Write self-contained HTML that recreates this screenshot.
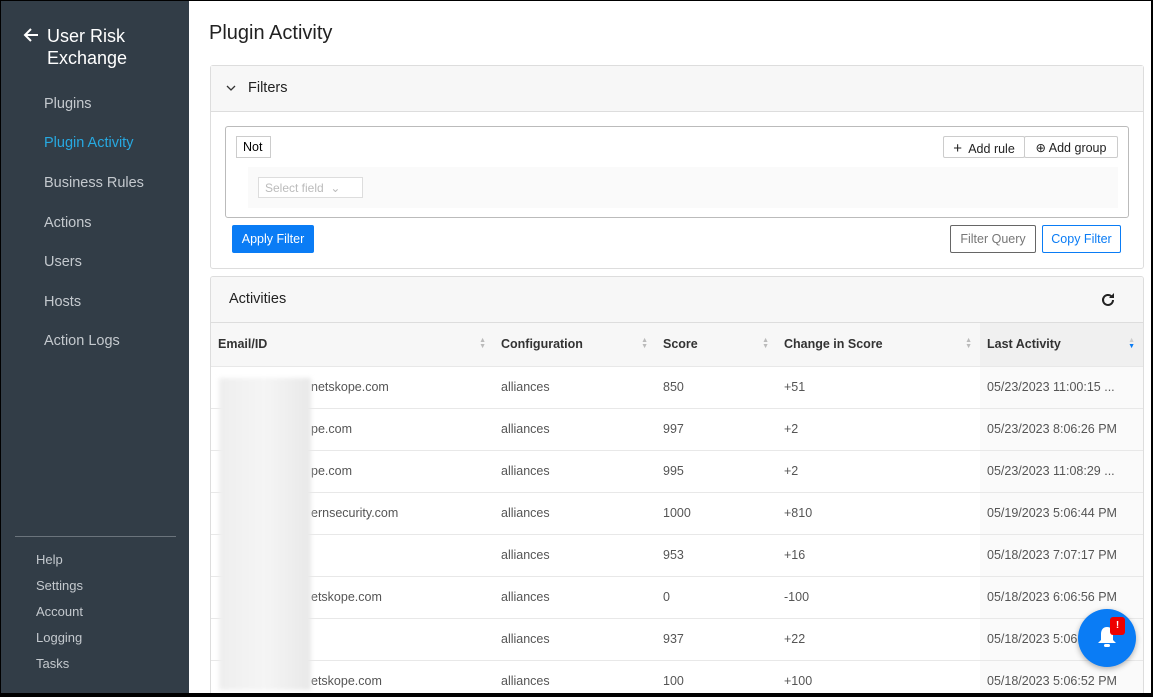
<!DOCTYPE html>
<html><head><style>
*{box-sizing:border-box;margin:0;padding:0}
body{width:1153px;height:697px;overflow:hidden;font-family:"Liberation Sans",sans-serif;background:#000;position:relative}
.win{position:absolute;left:1px;top:1px;width:1150px;height:692px;background:#fff;overflow:hidden}
.side{position:absolute;left:0;top:0;width:188px;height:692px;background:#323d47;color:#c9ced3}
.title{position:absolute;left:46px;top:24px;color:#fff;font-size:18px;line-height:22px}
.arrow{position:absolute;left:22px;top:26px}
.nav{position:absolute;left:43px;font-size:14.5px;color:#c4c9ce}
.nav.a{color:#27a9e1}
.sm{position:absolute;left:35px;font-size:13px;color:#c4c9ce}
.hr{position:absolute;left:14px;top:535px;width:161px;height:1px;background:#6b747c}
.main{position:absolute;left:188px;top:0;right:0;bottom:0}
h1{position:absolute;left:20px;top:21px;font-weight:normal;font-size:20px;color:#222}
.card{position:absolute;left:21px;border:1px solid #ddd;border-radius:3px;width:934px;background:#fff}
.fhead{height:46px;background:#f7f7f7;border-bottom:1px solid #ddd;font-size:14.5px;color:#222;padding:14px 0 0 37px;position:relative}
.btn{position:absolute;font-size:12.5px;border:1px solid #ccc;background:#fff;text-align:center;border-radius:2px}
table{border-collapse:collapse;width:932px;font-size:12.5px;color:#555}
td,th{height:42px;border-bottom:1px solid #e8e8e8;text-align:left;padding-left:7px;font-weight:normal}
th{background:#f7f7f7;color:#333;font-size:12.5px;font-weight:bold;height:43px;position:relative}
th .s{position:absolute;right:8px;top:15px;font-size:7px;color:#bbb;line-height:6px}
td:nth-child(5){background:#fafafa}
.blur{position:absolute;left:218px;top:377px;width:92px;height:312px;background:linear-gradient(90deg,#eee,#f5f5f5,#e8e8e8);filter:blur(2px)}
</style></head><body>
<div class="win">
<div class="side">
<svg class="arrow" width="16" height="16" viewBox="0 0 16 16"><path d="M15 8H2M8 2L2 8l6 6" stroke="#fff" stroke-width="2" fill="none"/></svg>
<div class="title">User Risk<br>Exchange</div>
<div class="nav" style="top:95px">Plugins</div>
<div class="nav a" style="top:134px">Plugin Activity</div>
<div class="nav" style="top:174px">Business Rules</div>
<div class="nav" style="top:214px">Actions</div>
<div class="nav" style="top:253px">Users</div>
<div class="nav" style="top:293px">Hosts</div>
<div class="nav" style="top:332px">Action Logs</div>
<div class="hr"></div>
<div class="sm" style="top:551px">Help</div>
<div class="sm" style="top:577px">Settings</div>
<div class="sm" style="top:603px">Account</div>
<div class="sm" style="top:629px">Logging</div>
<div class="sm" style="top:655px">Tasks</div>
</div>
<div class="main">
<h1>Plugin Activity</h1>
<div class="card" style="top:64px;height:204px">
<div class="fhead"><svg style="position:absolute;left:15px;top:19px" width="10" height="7" viewBox="0 0 10 7"><path d="M1 1l4 4 4-4" stroke="#333" stroke-width="1.3" fill="none"/></svg>Filters</div>
<div style="position:absolute;left:14px;top:60px;width:904px;height:92px;border:1px solid #bbb;border-radius:3px">
<div style="position:absolute;left:10px;top:9px;width:35px;height:22px;border:1px solid #ccc;font-size:12.5px;padding:3px 6px;background:#fff">Not</div>
<div style="position:absolute;left:22px;top:40px;width:870px;height:41px;background:#fafafa"></div>
<div style="position:absolute;left:32px;top:50px;width:105px;height:21px;border:1px solid #ddd;background:#fff;font-size:12px;color:#bbb;padding:3px 6px">Select field &nbsp;&#8964;</div>
<div class="btn" style="left:717px;top:9px;width:82px;height:22px;padding-top:3px;color:#222"><b style="font-size:15px;font-weight:normal">+</b>&nbsp; Add rule</div>
<div class="btn" style="left:798px;top:9px;width:94px;height:22px;padding-top:3px;color:#222">&#8853; Add group</div>
</div>
<div class="btn" style="left:21px;top:159px;width:82px;height:28px;padding-top:6px;background:#0a7cf5;border-color:#0a7cf5;color:#fff">Apply Filter</div>
<div class="btn" style="left:739px;top:159px;width:86px;height:28px;padding-top:6px;color:#777;border-color:#666">Filter Query</div>
<div class="btn" style="left:831px;top:159px;width:79px;height:28px;padding-top:6px;color:#0a7cf5;border-color:#0a7cf5">Copy Filter</div>
</div>
<div class="card" style="top:275px;height:420px;overflow:hidden">
<div class="fhead" style="padding-left:18px;height:46px">Activities<svg style="position:absolute;right:27px;top:15px" width="16" height="16" viewBox="0 0 16 16"><path d="M13 8a5 5 0 1 1-1.5-3.6" stroke="#222" stroke-width="2" fill="none"/><path d="M14 1v5h-5z" fill="#222"/></svg></div>
<table>
<tr><th style="width:283px">Email/ID<span class="s">▲<br>▼</span></th><th style="width:162px">Configuration<span class="s">▲<br>▼</span></th><th style="width:121px">Score<span class="s">▲<br>▼</span></th><th style="width:203px">Change in Score<span class="s">▲<br>▼</span></th><th style="background:#f0f0f0">Last Activity<span class="s"><span style="color:#ccc">▲</span><br><span style="color:#0a7cf5">▼</span></span></th></tr>
<tr><td style="padding-left:100px">netskope.com</td><td>alliances</td><td>850</td><td>+51</td><td>05/23/2023 11:00:15 ...</td></tr>
<tr><td style="padding-left:100px">pe.com</td><td>alliances</td><td>997</td><td>+2</td><td>05/23/2023 8:06:26 PM</td></tr>
<tr><td style="padding-left:100px">pe.com</td><td>alliances</td><td>995</td><td>+2</td><td>05/23/2023 11:08:29 ...</td></tr>
<tr><td style="padding-left:100px">ernsecurity.com</td><td>alliances</td><td>1000</td><td>+810</td><td>05/19/2023 5:06:44 PM</td></tr>
<tr><td></td><td>alliances</td><td>953</td><td>+16</td><td>05/18/2023 7:07:17 PM</td></tr>
<tr><td style="padding-left:100px">etskope.com</td><td>alliances</td><td>0</td><td>-100</td><td>05/18/2023 6:06:56 PM</td></tr>
<tr><td></td><td>alliances</td><td>937</td><td>+22</td><td>05/18/2023 5:06:...</td></tr>
<tr><td style="padding-left:100px">etskope.com</td><td>alliances</td><td>100</td><td>+100</td><td>05/18/2023 5:06:52 PM</td></tr>
</table>
</div>
</div>
<div class="blur"></div>
<div style="position:absolute;left:1077px;top:608px;width:58px;height:58px;border-radius:50%;background:#0a7cf5;box-shadow:0 2px 6px rgba(0,0,0,.3)">
<svg style="position:absolute;left:18px;top:16px" width="22" height="24" viewBox="0 0 22 24"><path d="M11 2c-4 0-6 3-6 7v6l-3 3h18l-3-3V9c0-4-2-7-6-7z" fill="#fff"/><rect x="8" y="19" width="6" height="3" rx="1.5" fill="#fff"/></svg>
<div style="position:absolute;left:32px;top:8px;width:15px;height:18px;background:#e00;border-radius:3px;color:#fff;font-size:10px;font-weight:bold;text-align:center;line-height:18px">!</div>
</div>
</div>
</body></html>
